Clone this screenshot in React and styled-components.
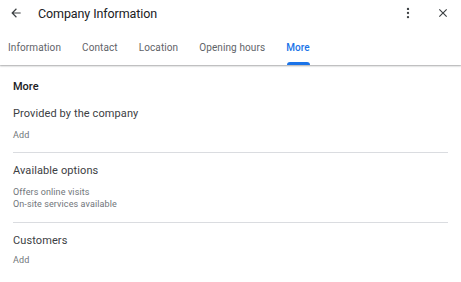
import React from "react";
import styled, { createGlobalStyle } from "styled-components";

const Global = createGlobalStyle`
  html, body { margin: 0; padding: 0; background: #fff; }
  body { font-family: Roboto, "Noto Sans", Arial, sans-serif; -webkit-font-smoothing: antialiased; }
`;

const Page = styled.div`
  width: 461px;
  height: 282px;
  background: #fff;
  overflow: hidden;
`;

const Header = styled.header`
  box-shadow: 0 1px 2px rgba(60, 64, 67, 0.3), 0 1px 1px rgba(60, 64, 67, 0.15);
  position: relative;
  z-index: 1;
`;

const TopRow = styled.div`
  height: 26px;
  display: flex;
  align-items: center;
  padding: 0 8px 0 8px;
`;

const IconButton = styled.button`
  border: 0;
  background: none;
  padding: 0;
  width: 16px;
  height: 16px;
  display: flex;
  align-items: center;
  justify-content: center;
  color: #3c4043;
  cursor: pointer;
`;

const Title = styled.h1`
  margin: 0 0 0 14px;
  font-size: 12.5px;
  font-weight: 400;
  color: #202124;
  flex: 1;
  letter-spacing: -0.1px;
`;

const Actions = styled.div`
  display: flex;
  align-items: center;
  gap: 19px;
  margin-right: 2px;
`;

const Tabs = styled.nav`
  display: flex;
  height: 37px;
  padding-left: 8px;
  gap: 21px;
  margin-top: 2px;
`;

const Tab = styled.div`
  position: relative;
  display: flex;
  align-items: center;
  padding-top: 2px;
  font-size: 10px;
  letter-spacing: 0.1px;
  color: ${(p) => (p.$active ? "#1a73e8" : "#5f6368")};
  font-weight: ${(p) => (p.$active ? 500 : 400)};
  &::after {
    content: "";
    display: ${(p) => (p.$active ? "block" : "none")};
    position: absolute;
    left: 1px;
    right: 0;
    bottom: 0;
    height: 3px;
    border-radius: 3px 3px 0 0;
    background: #1a73e8;
  }
`;

const Content = styled.main`
  padding: 14px 13px 0 13px;
`;

const Heading = styled.h2`
  margin: 0;
  font-size: 11px;
  line-height: 16px;
  font-weight: 500;
  color: #202124;
`;

const Section = styled.section`
  padding: ${(p) => (p.$first ? "11px 0 11px" : "10px 0 12px")};
  border-bottom: ${(p) => (p.$last ? "none" : "1px solid #dadce0")};
`;

const SectionTitle = styled.div`
  font-size: 11px;
  line-height: 16px;
  color: #3c4043;
  letter-spacing: 0.1px;
`;

const Lines = styled.div`
  margin-top: ${(p) => p.$gap}px;
`;

const Line = styled.div`
  font-size: 9px;
  line-height: 12px;
  color: #70757a;
  letter-spacing: 0.1px;
`;

const ArrowIcon = () => (
  <svg width="14" height="14" viewBox="0 0 24 24" fill="currentColor">
    <path d="M20 11H7.83l5.59-5.59L12 4l-8 8 8 8 1.41-1.41L7.83 13H20v-2z" />
  </svg>
);

const DotsIcon = () => (
  <svg width="14" height="14" viewBox="0 0 24 24" fill="currentColor">
    <circle cx="12" cy="5" r="2" />
    <circle cx="12" cy="12" r="2" />
    <circle cx="12" cy="19" r="2" />
  </svg>
);

const CloseIcon = () => (
  <svg width="14" height="14" viewBox="0 0 24 24" fill="currentColor">
    <path d="M19 6.41 17.59 5 12 10.59 6.41 5 5 6.41 10.59 12 5 17.59 6.41 19 12 13.41 17.59 19 19 17.59 13.41 12z" />
  </svg>
);

const tabs = ["Information", "Contact", "Location", "Opening hours", "More"];

const sections = [
  { title: "Provided by the company", lines: ["Add"], gap: 7 },
  { title: "Available options", lines: ["Offers online visits", "On-site services available"], gap: 7 },
  { title: "Customers", lines: ["Add"], gap: 5 },
];

export default function App() {
  return (
    <Page>
      <Global />
      <Header>
        <TopRow>
          <IconButton aria-label="Back"><ArrowIcon /></IconButton>
          <Title>Company Information</Title>
          <Actions>
            <IconButton aria-label="More options"><DotsIcon /></IconButton>
            <IconButton aria-label="Close"><CloseIcon /></IconButton>
          </Actions>
        </TopRow>
        <Tabs>
          {tabs.map((t) => (
            <Tab key={t} $active={t === "More"}>{t}</Tab>
          ))}
        </Tabs>
      </Header>
      <Content>
        <Heading>More</Heading>
        {sections.map((s, i) => (
          <Section key={s.title} $first={i === 0} $last={i === sections.length - 1}>
            <SectionTitle>{s.title}</SectionTitle>
            <Lines $gap={s.gap}>
              {s.lines.map((l) => (
                <Line key={l}>{l}</Line>
              ))}
            </Lines>
          </Section>
        ))}
      </Content>
    </Page>
  );
}
